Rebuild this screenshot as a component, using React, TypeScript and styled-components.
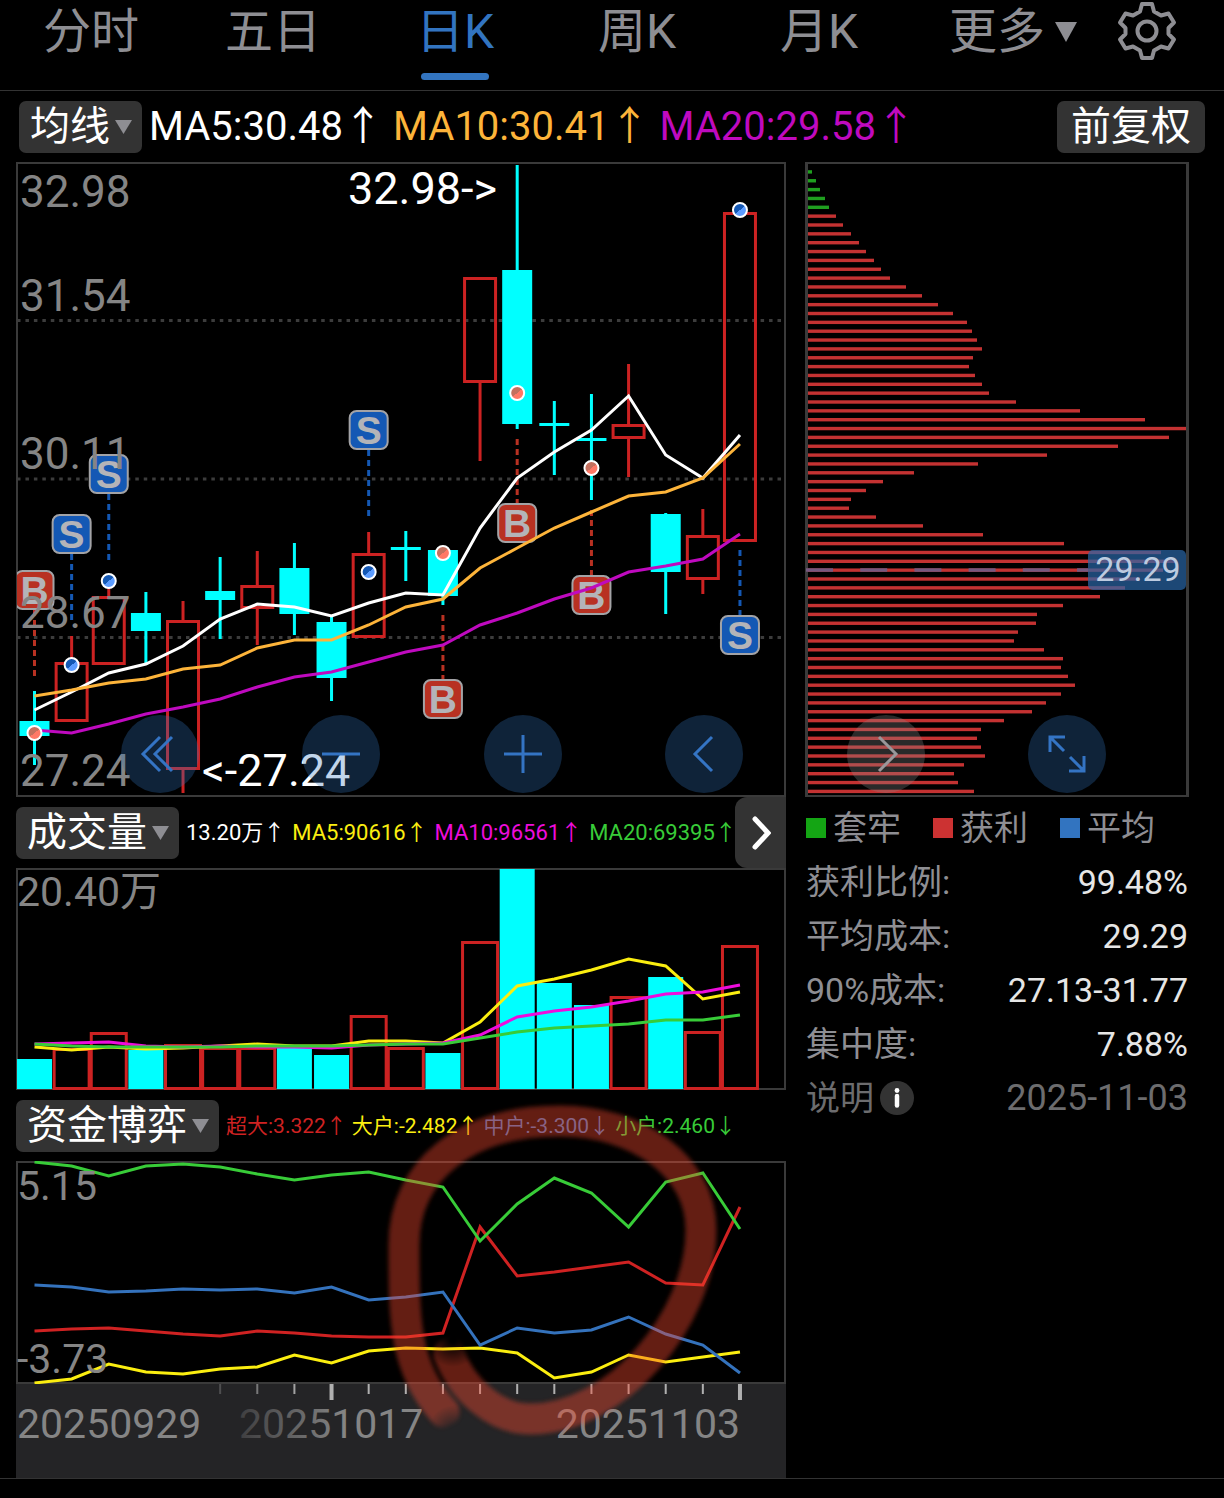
import React from 'react';
import styled, { createGlobalStyle } from 'styled-components';

const fontStack = 'Roboto, "Noto Sans CJK SC", sans-serif';

const color = {
  up: '#cc2222',
  down: '#00ffff',
  frame: '#3a3a3a',
  chip: '#333333',
  label: '#858585',
  muted: '#8e8e93',
  accent: '#3274c0',
  sell: '#1458b4',
  buy: '#b83122',
};

const GlobalStyle = createGlobalStyle`
  * { box-sizing: border-box; }
  body { margin: 0; background: #000; color: #fff; font-family: ${fontStack}; }
  button, select { font-family: inherit; border: 0; margin: 0; padding: 0; cursor: pointer; }
`;

const Page = styled.main`
  min-width: 1000px;
  padding-bottom: 18px;
  background: #000;
`;

/* ---------- period tabs ---------- */

const Tabs = styled.nav`
  display: grid;
  grid-template-columns: repeat(5, 182fr) 206fr 62fr;
  height: 91px;
  padding-right: 46px;
  border-bottom: 1px solid #333;
`;

const Tab = styled.button<{ $active?: boolean }>`
  display: flex;
  flex-direction: column;
  align-items: center;
  background: none;
  color: ${(p) => (p.$active ? color.accent : color.muted)};
  font-size: 48px;
  line-height: 64px;
  white-space: nowrap;

  &::after {
    content: '';
    width: 68px;
    height: 7px;
    margin-top: 9px;
    border-radius: 4px;
    background: ${(p) => (p.$active ? color.accent : 'transparent')};
  }
`;

const TabLabel = styled.span`
  display: flex;
  align-items: center;
  gap: 10px;
`;

const GearButton = styled.button`
  display: flex;
  justify-content: center;
  align-items: center;
  height: 62px;
  background: none;
  color: ${color.muted};
`;

/* ---------- indicator bars ---------- */

const IndicatorBar = styled.div<{ $inset?: boolean }>`
  display: flex;
  align-items: center;
  height: 71px;
  gap: 7px;
  padding: ${(p) => (p.$inset ? '0 19px' : '0')};
`;

const Picker = styled.label`
  position: relative;
  flex: none;
  display: flex;
`;

const PickerSelect = styled.select`
  appearance: none;
  height: 52px;
  padding: 0 32px 0 11px;
  border-radius: 7px;
  background: ${color.chip};
  color: #fff;
  font-size: 40px;
  line-height: 52px;
`;

const PickerArrow = styled.svg`
  position: absolute;
  right: 10px;
  top: 19px;
  pointer-events: none;
`;

const ChipButton = styled.button`
  height: 52px;
  margin-left: auto;
  padding: 0 14px;
  border-radius: 7px;
  background: ${color.chip};
  color: #fff;
  font-size: 40px;
  line-height: 52px;
`;

const Readings = styled.div<{ $size: number; $gap: number }>`
  display: flex;
  gap: ${(p) => p.$gap}px;
  min-width: 0;
  flex: 1;
  overflow: hidden;
  font-size: ${(p) => p.$size}px;
  line-height: 48px;
  white-space: nowrap;
`;

const Reading = styled.span<{ $color: string }>`
  color: ${(p) => p.$color};
`;

const MoreButton = styled.button`
  flex: none;
  display: flex;
  justify-content: center;
  align-items: center;
  width: 51px;
  height: 71px;
  margin-left: -7px;
  border-radius: 12px 0 0 12px;
  background: ${color.chip};
`;

/* ---------- panels ---------- */

const Columns = styled.section`
  position: relative;
  display: grid;
  grid-template-columns: minmax(0, 2fr) minmax(0, 1fr);
  column-gap: 19px;
  padding: 0 34px 0 16px;
`;

const LowerColumns = styled(Columns)`
  border-bottom: 1px solid #333;
`;

const Plot = styled.svg`
  display: block;
  width: 100%;
  height: auto;
  font-family: ${fontStack};
`;

const FundPanel = styled.div`
  position: relative;
`;

const Axis = styled.div`
  background: #242426;
`;

const Ink = styled.svg`
  position: absolute;
  inset: 0;
  width: 100%;
  height: 100%;
  pointer-events: none;
`;

const ZoomBar = styled.div`
  position: absolute;
  left: 121px;
  right: 118px;
  bottom: 4px;
  display: flex;
  justify-content: space-between;
`;

const RoundButton = styled.button<{ $dim?: boolean }>`
  display: flex;
  justify-content: center;
  align-items: center;
  width: 78px;
  height: 78px;
  border-radius: 50%;
  background: ${(p) => (p.$dim ? 'rgba(140, 140, 140, 0.3)' : 'rgba(50, 115, 190, 0.3)')};
  color: ${(p) => (p.$dim ? '#99979a' : '#3474c4')};
`;

/* ---------- cost distribution summary ---------- */

const Summary = styled.aside`
  padding: 4px 2px 0 1px;
  font-size: 34px;
  line-height: 54px;
  color: ${color.muted};
  white-space: nowrap;
`;

const Legend = styled.div`
  display: flex;
  gap: 32px;
`;

const LegendItem = styled.span<{ $color: string }>`
  display: flex;
  align-items: center;
  gap: 7px;

  &::before {
    content: '';
    width: 20px;
    height: 20px;
    background: ${(p) => p.$color};
  }
`;

const Facts = styled.dl`
  margin: 0;
`;

const Fact = styled.div`
  display: flex;
  justify-content: space-between;

  dt, dd { margin: 0; }
  dd { color: #e6e6e6; }
`;

const Footnote = styled.div`
  display: flex;
  align-items: center;
  color: #6c6c6e;

  time { margin-left: auto; font-size: 36px; }
`;

const InfoButton = styled.button`
  display: flex;
  margin-left: 6px;
  background: none;
`;

/* ---------- data ---------- */

const xAt = (i: number) => 34.5 + 37.13 * i;

type Candle = { up?: boolean; high: number; low: number; top: number; bottom: number };

const candles: Candle[] = [
  { high: 691, low: 765, top: 721, bottom: 736 },
  { up: true, high: 636, low: 722, top: 662, bottom: 722 },
  { up: true, high: 575, low: 665, top: 596, bottom: 665 },
  { high: 592, low: 665, top: 613, bottom: 631 },
  { up: true, high: 601, low: 793, top: 620, bottom: 770 },
  { high: 557, low: 639, top: 591, bottom: 600 },
  { up: true, high: 551, low: 645, top: 585, bottom: 609 },
  { high: 543, low: 635, top: 568, bottom: 614 },
  { high: 616, low: 701, top: 622, bottom: 678 },
  { up: true, high: 532, low: 638, top: 553, bottom: 638 },
  { high: 531, low: 581, top: 547, bottom: 550 },
  { high: 549, low: 605, top: 550, bottom: 596 },
  { up: true, high: 277, low: 461, top: 277, bottom: 383 },
  { high: 165, low: 429, top: 270, bottom: 424 },
  { high: 401, low: 475, top: 423, bottom: 426 },
  { high: 394, low: 500, top: 438, bottom: 441 },
  { up: true, high: 364, low: 477, top: 424, bottom: 439 },
  { high: 513, low: 614, top: 514, bottom: 572 },
  { up: true, high: 509, low: 594, top: 535, bottom: 580 },
  { up: true, high: 212, low: 542, top: 212, bottom: 542 },
];

const priceLines = [
  { stroke: '#ffffff', ys: [710, 692, 673, 664, 646, 619, 604, 607, 616, 603, 593, 595, 528, 478, 452, 430, 396, 455, 478, 435] },
  { stroke: '#fdb43a', ys: [696, 690, 683, 679, 669, 665, 648, 640, 640, 625, 607, 599, 568, 548, 528, 512, 496, 492, 478, 444] },
  { stroke: '#bf0abf', ys: [730, 733, 724, 714, 707, 699, 687, 677, 672, 662, 652, 645, 625, 613, 599, 588, 572, 566, 559, 534] },
];

const volumes = [1059, 1048, 1032, 1050, 1044, 1047, 1047, 1048, 1055, 1015, 1047, 1053, 941, 869, 983, 1005, 996, 977, 1031, 945];
const fallingVolumes = [0, 3, 7, 8, 11, 13, 14, 15, 17];

const volumeLines = [
  { stroke: '#fbee10', ys: [1047, 1050, 1047, 1049, 1048, 1046, 1044, 1046, 1046, 1041, 1041, 1043, 1022, 986, 979, 970, 959, 966, 999, 992] },
  { stroke: '#ee0cdc', ys: [1044, 1043, 1042, 1046, 1047, 1046, 1047, 1047, 1048, 1045, 1044, 1043, 1035, 1017, 1011, 1007, 1001, 994, 992, 985] },
  { stroke: '#38cc38', ys: [1044, 1046, 1047, 1047, 1047, 1047, 1046, 1046, 1046, 1045, 1044, 1044, 1038, 1032, 1028, 1026, 1024, 1020, 1020, 1015] },
];

const fundLines = [
  { stroke: '#cf2222', ys: [1332, 1330, 1329, 1332, 1335, 1337, 1332, 1334, 1337, 1338, 1338, 1334, 1228, 1277, 1273, 1268, 1263, 1284, 1286, 1208] },
  { stroke: '#fbee10', ys: [1384, 1380, 1365, 1373, 1375, 1370, 1368, 1356, 1364, 1352, 1349, 1350, 1349, 1354, 1379, 1373, 1356, 1363, 1358, 1353] },
  { stroke: '#3472bc', ys: [1286, 1288, 1293, 1292, 1290, 1291, 1290, 1294, 1288, 1301, 1298, 1293, 1346, 1329, 1334, 1331, 1318, 1335, 1346, 1374] },
  { stroke: '#38cc38', ys: [1163, 1167, 1177, 1167, 1165, 1168, 1175, 1181, 1176, 1173, 1181, 1188, 1242, 1205, 1179, 1194, 1228, 1183, 1174, 1230] },
];

type Trade = { i: number; side: 'B' | 'S'; box: number; dot: number; from: number; to: number };

const trades: Trade[] = [
  { i: 0, side: 'B', box: 590, dot: 733, from: 610, to: 676 },
  { i: 1, side: 'S', box: 534, dot: 665, from: 554, to: 620 },
  { i: 2, side: 'S', box: 474, dot: 581, from: 494, to: 560 },
  { i: 9, side: 'S', box: 430, dot: 572, from: 450, to: 516 },
  { i: 11, side: 'B', box: 699, dot: 553, from: 615, to: 679 },
  { i: 13, side: 'B', box: 523, dot: 393, from: 439, to: 503 },
  { i: 15, side: 'B', box: 595, dot: 468, from: 510, to: 575 },
  { i: 19, side: 'S', box: 635, dot: 210, from: 550, to: 615 },
];

const costEnds = [
  812, 816, 820, 825, 829, 836, 843, 851, 859, 866, 874, 881, 890, 906, 922, 938, 953, 967, 972, 977, 982, 973, 969, 975,
  982, 989, 1016, 1080, 1145, 1186, 1169, 1118, 1047, 978, 914, 883, 866, 851, 849, 876, 923, 983, 1064, 1161, 1175, 1163,
  1140, 1125, 1100, 1063, 1037, 1036, 1018, 1014, 1044, 1063, 1061, 1068, 1075, 1061, 1046, 1032, 1004, 981, 977, 981, 985,
  964, 954, 958, 974,
];

const facts = [
  ['获利比例:', '99.48%'],
  ['平均成本:', '29.29'],
  ['90%成本:', '27.13-31.77'],
  ['集中度:', '7.88%'],
];

/* ---------- pieces ---------- */

const Lines = ({ lines }: { lines: { stroke: string; ys: number[] }[] }) => (
  <>
    {lines.map((l, k) => (
      <polyline
        key={k}
        points={l.ys.map((y, i) => `${xAt(i)},${y}`).join(' ')}
        fill="none"
        stroke={l.stroke}
        strokeWidth="3"
      />
    ))}
  </>
);

const IndicatorPicker = ({ name, value }: { name: string; value: string }) => (
  <Picker>
    <PickerSelect aria-label={name} defaultValue={value}>
      <option value={value}>{value}</option>
    </PickerSelect>
    <PickerArrow width="17" height="14" viewBox="0 0 17 14">
      <path d="M0 0H17L8.5 14Z" fill="#8e8e93" />
    </PickerArrow>
  </Picker>
);

const PriceChart = () => (
  <Plot viewBox="16 162 770 635" role="img" aria-label="日K线图">
    <defs>
      <clipPath id="priceClip">
        <rect x="17" y="163" width="768" height="633" />
      </clipPath>
      <linearGradient id="dotS" x1="0" y1="0" x2="0.8" y2="1">
        <stop offset="0.55" stopColor="#1458b4" />
        <stop offset="0.55" stopColor="#5c9cff" />
      </linearGradient>
      <linearGradient id="dotB" x1="0" y1="0" x2="0.8" y2="1">
        <stop offset="0.55" stopColor="#c4705e" />
        <stop offset="0.55" stopColor="#ff7866" />
      </linearGradient>
    </defs>
    <rect x="17" y="163" width="768" height="633" fill="none" stroke={color.frame} strokeWidth="2" />
    {[320.5, 479, 637.5].map((y) => (
      <line key={y} x1="17" x2="785" y1={y} y2={y} stroke="#3c3c3c" strokeWidth="3" strokeDasharray="3.5 4.95" />
    ))}
    {candles.map((c, i) => {
      const x = xAt(i);
      return c.up ? (
        <g key={i} stroke={color.up} strokeWidth="3" fill="none">
          <path d={`M${x} ${c.high}V${c.top}M${x} ${c.bottom}V${c.low}`} />
          <rect x={x - 15.5} y={c.top + 1.5} width="31" height={c.bottom - c.top - 3} />
        </g>
      ) : (
        <g key={i} fill={color.down}>
          <rect x={x - 1.5} y={c.high} width="3" height={c.low - c.high} />
          <rect x={x - 15} y={c.top} width="30" height={c.bottom - c.top} />
        </g>
      );
    })}
    <g clipPath="url(#priceClip)">
      {trades.map((t) => {
        const x = xAt(t.i);
        const tint = t.side === 'S' ? color.sell : color.buy;
        return (
          <g key={t.i}>
            <line x1={x} x2={x} y1={t.from} y2={t.to} stroke={tint} strokeWidth="3" strokeDasharray="6 4" />
            <rect x={x - 19} y={t.box - 19} width="38" height="38" rx="7" fill={tint} stroke="#a3a3a6" strokeWidth="2" />
            <text x={x} y={t.box + 14} textAnchor="middle" fontSize="39" fontWeight="700" fill="#b4b4b8" fontFamily="'Liberation Sans', sans-serif">
              {t.side}
            </text>
          </g>
        );
      })}
    </g>
    <Lines lines={priceLines} />
    {trades.map((t) => (
      <circle key={t.i} cx={xAt(t.i)} cy={t.dot} r="7" fill={`url(#dot${t.side})`} stroke="#fff" strokeWidth="2" />
    ))}
    <g fontSize="44" fill={color.label}>
      <text x="20" y="207">32.98</text>
      <text x="20" y="311">31.54</text>
      <text x="20" y="469">30.11</text>
      <text x="20" y="628">28.67</text>
      <text x="20" y="786">27.24</text>
    </g>
    <g fontSize="45" fill="#fff">
      <text x="497" y="204" textAnchor="end">32.98-&gt;</text>
      <text x="202" y="786">&lt;-27.24</text>
    </g>
  </Plot>
);

const CostChart = () => (
  <Plot viewBox="805 162 385 635" role="img" aria-label="筹码分布">
    <path d="M805 163H1189M805 796H1189" stroke={color.frame} strokeWidth="2" />
    <path d="M806.5 162V797M1187.5 162V797" stroke={color.frame} strokeWidth="3" />
    {costEnds.map((end, i) => (
      <rect key={i} x="808" y={170.2 + i * 8.85} width={end - 808} height="3.4" fill={i < 5 ? '#1f9f1f' : '#c43232'} />
    ))}
    <line x1="806" x2="1088" y1="570" y2="570" stroke="#75587f" strokeWidth="3.4" strokeDasharray="27 27.2" />
    <rect x="1088" y="550" width="98" height="40" rx="5" fill="#2a66a8" fillOpacity="0.7" />
    <text x="1138" y="581" textAnchor="middle" fontSize="34" fill="#bccbe0">29.29</text>
  </Plot>
);

const VolumeChart = () => (
  <Plot viewBox="16 868 770 222" role="img" aria-label="成交量图">
    <rect x="17" y="869" width="768" height="220" fill="none" stroke={color.frame} strokeWidth="2" />
    {volumes.map((top, i) =>
      fallingVolumes.includes(i) ? (
        <rect key={i} x={xAt(i) - 17.5} y={top} width="35" height={1089 - top} fill={color.down} />
      ) : (
        <rect key={i} x={xAt(i) - 17.5} y={top + 1.5} width="35" height={1087 - top} fill="none" stroke={color.up} strokeWidth="3" />
      ),
    )}
    <Lines lines={volumeLines} />
    <text x="17" y="906" fontSize="41" fill={color.label}>20.40万</text>
  </Plot>
);

const FundChart = () => (
  <Plot viewBox="16 1162 770 223" role="img" aria-label="资金博弈图">
    <rect x="17" y="1163" width="768" height="221" fill="none" stroke={color.frame} strokeWidth="2" />
    <Lines lines={fundLines} />
    <g fontSize="41" fill={color.label}>
      <text x="17" y="1201">5.15</text>
      <text x="17" y="1374">-3.73</text>
    </g>
  </Plot>
);

const DateAxis = () => (
  <Axis>
    <Plot viewBox="16 1385 770 94" role="img" aria-label="日期">
      <defs>
        <linearGradient id="dateFade" gradientUnits="userSpaceOnUse" x1="235" x2="345" y1="0" y2="0">
          <stop offset="0" stopColor="#3c3c3e" />
          <stop offset="1" stopColor={color.label} />
        </linearGradient>
      </defs>
      {candles.slice(5).map((_, k) => {
        const i = k + 5;
        const major = i === 8 || i === 19;
        return (
          <rect
            key={i}
            x={xAt(i) - (major ? 2 : 1)}
            y="1385"
            width={major ? 4 : 2}
            height={major ? 16 : 10}
            fill="#b0b0b0"
            opacity={Math.min(1, (i - 4) * 0.3)}
          />
        );
      })}
      <g fontSize="41" fill={color.label}>
        <text x="17" y="1439">20250929</text>
        <text x="239" y="1439" fill="url(#dateFade)">20251017</text>
        <text x="740" y="1439" textAnchor="end">20251103</text>
      </g>
    </Plot>
  </Axis>
);

const HandCircle = () => (
  <Ink viewBox="0 0 770 388" aria-hidden="true">
    <defs>
      <filter id="soft">
        <feGaussianBlur stdDeviation="2" />
      </filter>
      <radialGradient id="fade">
        <stop offset="0.1" stopColor="#000" />
        <stop offset="1" stopColor="#000" stopOpacity="0" />
      </radialGradient>
      <mask id="inkEnds" maskUnits="userSpaceOnUse" x="0" y="0" width="770" height="388">
        <rect width="770" height="388" fill="#fff" />
        <circle cx="437" cy="250" r="27" fill="url(#fade)" />
        <circle cx="438" cy="342" r="27" fill="url(#fade)" />
      </mask>
    </defs>
    <g mask="url(#inkEnds)">
      <path
        d="M433 264C446 300 480 329 514 329C600 329 685 230 685 140C685 75 620 31 544 31C450 31 388 80 388 155C388 230 388 278 428 322"
        fill="none"
        stroke="#fa482d"
        strokeOpacity="0.4"
        strokeWidth="31"
        strokeLinecap="round"
        filter="url(#soft)"
      />
    </g>
  </Ink>
);

const Glyph = ({ d }: { d: string }) => (
  <svg width="40" height="40" viewBox="0 0 40 40" fill="none" stroke="currentColor" strokeWidth="3">
    <path d={d} />
  </svg>
);

const periods = ['分时', '五日', '日K', '周K', '月K'];

export default function App() {
  const [period, setPeriod] = React.useState('日K');

  return (
    <Page>
      <GlobalStyle />
      <Tabs aria-label="周期">
        {periods.map((p) => (
          <Tab key={p} $active={p === period} onClick={() => setPeriod(p)}>
            {p}
          </Tab>
        ))}
        <Tab aria-haspopup="menu">
          <TabLabel>
            更多
            <svg width="22" height="20" viewBox="0 0 22 20">
              <path d="M0 0H22L11 20Z" fill="currentColor" />
            </svg>
          </TabLabel>
        </Tab>
        <GearButton aria-label="设置">
          <svg width="60" height="60" viewBox="0 0 60 60" fill="none" stroke="currentColor" strokeWidth="4" strokeLinejoin="round">
            <path d="M25 3H35L37 10.500L44 14.500L51.500 12.500L57 21.500L51.500 27V33L57 38.500L51.500 47.500L44 45.500L37 49.500L35 57H25L23 49.500L16 45.500L8.500 47.500L3 38.500L8.500 33V27L3 21.500L8.500 12.500L16 14.500L23 10.500Z" />
            <circle cx="30" cy="30" r="9.500" />
          </svg>
        </GearButton>
      </Tabs>

      <IndicatorBar $inset>
        <IndicatorPicker name="主图指标" value="均线" />
        <Readings $size={40} $gap={10}>
          <Reading $color="#ffffff">MA5:30.48↑</Reading>
          <Reading $color="#fdb43a">MA10:30.41↑</Reading>
          <Reading $color="#bf0abf">MA20:29.58↑</Reading>
        </Readings>
        <ChipButton>前复权</ChipButton>
      </IndicatorBar>

      <Columns>
        <PriceChart />
        <CostChart />
        <ZoomBar>
          <RoundButton aria-label="最早"><Glyph d="M20 3L3 20L20 37M32 3L15 20L32 37" /></RoundButton>
          <RoundButton aria-label="缩小"><Glyph d="M1 20H39" /></RoundButton>
          <RoundButton aria-label="放大"><Glyph d="M1 20H39M20 1V39" /></RoundButton>
          <RoundButton aria-label="向左"><Glyph d="M28 3L11 20L28 37" /></RoundButton>
          <RoundButton aria-label="向右" $dim><Glyph d="M13 3L30 20L13 37" /></RoundButton>
          <RoundButton aria-label="全屏"><Glyph d="M18 3H3V18M3 3L17 17M37 22V37H22M37 37L23 23" /></RoundButton>
        </ZoomBar>
      </Columns>

      <LowerColumns>
        <div>
          <IndicatorBar>
            <IndicatorPicker name="副图指标一" value="成交量" />
            <Readings $size={22} $gap={7}>
              <Reading $color="#ffffff">13.20万↑</Reading>
              <Reading $color="#fbee10">MA5:90616↑</Reading>
              <Reading $color="#ee0cdc">MA10:96561↑</Reading>
              <Reading $color="#38cc38">MA20:69395↑</Reading>
            </Readings>
            <MoreButton aria-label="更多指标">
              <svg width="20" height="34" viewBox="0 0 20 34" fill="none" stroke="#fff" strokeWidth="5" strokeLinecap="round">
                <path d="M4 3L17 17L4 31" />
              </svg>
            </MoreButton>
          </IndicatorBar>
          <VolumeChart />
          <FundPanel>
            <IndicatorBar>
              <IndicatorPicker name="副图指标二" value="资金博弈" />
              <Readings $size={21} $gap={5}>
                <Reading $color="#cf2222">超大:3.322↑</Reading>
                <Reading $color="#fbee10">大户:-2.482↑</Reading>
                <Reading $color="#3f74bd">中户:-3.300↓</Reading>
                <Reading $color="#38cc38">小户:2.460↓</Reading>
              </Readings>
            </IndicatorBar>
            <FundChart />
            <DateAxis />
            <HandCircle />
          </FundPanel>
        </div>

        <Summary>
          <Legend>
            <LegendItem $color="#14a514">套牢</LegendItem>
            <LegendItem $color="#cc3232">获利</LegendItem>
            <LegendItem $color="#3274c0">平均</LegendItem>
          </Legend>
          <Facts>
            {facts.map(([k, v]) => (
              <Fact key={k}>
                <dt>{k}</dt>
                <dd>{v}</dd>
              </Fact>
            ))}
          </Facts>
          <Footnote>
            说明
            <InfoButton aria-label="说明">
              <svg width="34" height="34" viewBox="0 0 34 34">
                <circle cx="17" cy="17" r="17" fill="#333" />
                <circle cx="17" cy="9.500" r="2.400" fill="#fff" />
                <path d="M17 15V24.500" stroke="#fff" strokeWidth="4.500" strokeLinecap="round" />
              </svg>
            </InfoButton>
            <time dateTime="2025-11-03">2025-11-03</time>
          </Footnote>
        </Summary>
      </LowerColumns>
    </Page>
  );
}
